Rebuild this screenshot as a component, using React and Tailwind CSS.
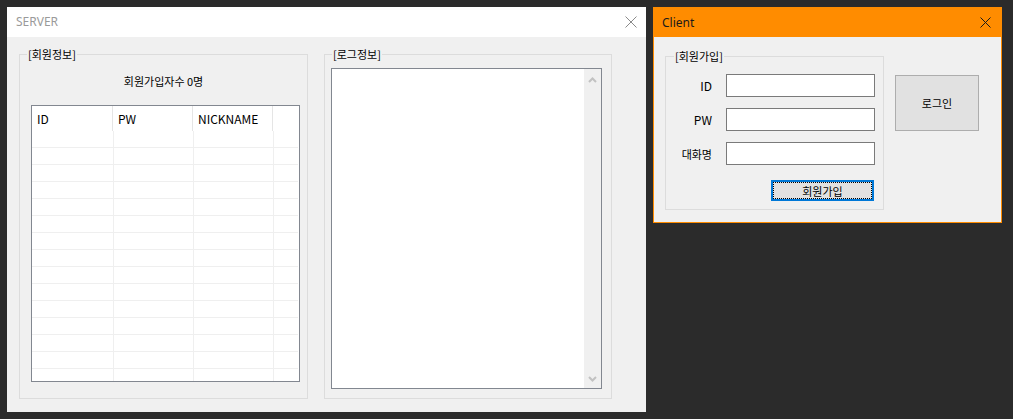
import React from 'react';

const CloseIcon = ({ color, size }) => (
    <svg width={size} height={size} viewBox={`0 0 ${size} ${size}`}>
        <line x1="0.5" y1="0.5" x2={size - 0.5} y2={size - 0.5} stroke={color} strokeWidth="1" />
        <line x1={size - 0.5} y1="0.5" x2="0.5" y2={size - 0.5} stroke={color} strokeWidth="1" />
    </svg>
);

const Chevron = ({ up }) => (
    <svg width="9" height="6" viewBox="0 0 9 6">
        <polyline
            points={up ? '1,5 4.5,1.5 8,5' : '1,1 4.5,4.5 8,1'}
            fill="none"
            stroke="#c2c2c2"
            strokeWidth="2"
        />
    </svg>
);

const GroupBox = ({ label, labelLeft, className, children }) => (
    <div className={`relative border border-[#dcdcdc] ${className}`}>
        <span
            className="absolute top-[-9px] px-[1px] bg-[#f0f0f0] text-[11px] leading-[16px] text-black"
            style={{ left: labelLeft }}
        >
            {label}
        </span>
        {children}
    </div>
);

const ServerWindow = () => {
    const rows = Array.from({ length: 15 });

    return (
        <div className="w-[639px] h-[405px] flex flex-col bg-[#f0f0f0]">
            <div className="h-[30px] bg-white flex items-center justify-between pl-[9px] pr-[9px]">
                <span className="font-['Noto_Sans',sans-serif] text-[12px] text-[#9a9a9a]">SERVER</span>
                <CloseIcon color="#8a8a8a" size={12} />
            </div>

            <div className="flex-1 flex gap-[16px] pl-[12px] pt-[17px]">
                <GroupBox label="[회원정보]" labelLeft={7} className="w-[289px] h-[345px] flex flex-col">
                    <div className="pt-[18px] text-center text-[11px] leading-[16px] text-black">
                        회원가입자수 0명
                    </div>
                    <div className="mt-[16px] ml-[11px] w-[269px] h-[277px] border border-[#828790] bg-white overflow-hidden">
                        <div className="flex h-[25px] text-[12px] text-black">
                            <div className="w-[81px] border-r border-[#e5e5e5] pl-[5px] flex items-center">ID</div>
                            <div className="w-[80px] border-r border-[#e5e5e5] pl-[5px] flex items-center">PW</div>
                            <div className="w-[80px] border-r border-[#e5e5e5] pl-[5px] flex items-center">NICKNAME</div>
                            <div className="flex-1" />
                        </div>
                        {rows.map((_, i) => (
                            <div key={i} className="flex h-[17px] border-b border-[#efefef] mr-[1px]">
                                <div className="w-[82px] border-r border-[#efefef]" />
                                <div className="w-[80px] border-r border-[#efefef]" />
                                <div className="w-[80px] border-r border-[#efefef]" />
                                <div className="flex-1" />
                            </div>
                        ))}
                    </div>
                </GroupBox>

                <GroupBox label="[로그정보]" labelLeft={7} className="w-[288px] h-[345px]">
                    <div className="mt-[13px] ml-[6px] w-[271px] h-[321px] border border-[#828790] bg-white flex justify-end">
                        <div className="w-[17px] bg-[#f0f0f0] flex flex-col items-center justify-between pt-[8px] pb-[6px]">
                            <Chevron up />
                            <Chevron />
                        </div>
                    </div>
                </GroupBox>
            </div>
        </div>
    );
};

const ClientWindow = () => {
    const fields = ['ID', 'PW', '대화명'];

    return (
        <div className="w-[349px] h-[216px] border border-[#ff8c00] flex flex-col bg-[#f0f0f0]">
            <div className="h-[29px] bg-[#ff8c00] flex items-center justify-between pl-[8px] pr-[10px]">
                <span className="font-['Noto_Sans',sans-serif] text-[12px] text-[#1a1a1a]">Client</span>
                <CloseIcon color="#1a1a1a" size={11} />
            </div>

            <div className="flex-1 flex items-start pl-[11px] pt-[19px]">
                <GroupBox label="[회원가입]" labelLeft={8} className="w-[219px] h-[154px] flex flex-col pt-[17px] gap-[11px]">
                    {fields.map((f) => (
                        <div key={f} className="flex items-center">
                            <div className={`w-[46px] text-right leading-[16px] text-black ${f === '대화명' ? 'text-[11px]' : 'text-[12px]'}`}>
                                {f}
                            </div>
                            <div className="ml-[14px] w-[149px] h-[23px] border border-[#7a7a7a] bg-white" />
                        </div>
                    ))}
                    <button className="mt-[4px] ml-[105px] w-[103px] h-[21px] border-2 border-[#0078d7] bg-[#e1e1e1] p-0 flex">
                        <span className="flex-1 border border-dotted border-black flex items-center justify-center text-[11px] leading-[16px] text-black">
                            회원가입
                        </span>
                    </button>
                </GroupBox>

                <button className="ml-[11px] mt-[19px] w-[84px] h-[56px] border border-[#adadad] bg-[#e1e1e1] text-[11px] text-black">
                    로그인
                </button>
            </div>
        </div>
    );
};

const App = () => {
    return (
        <div className="w-[1013px] h-[419px] bg-[#2b2b2b] flex items-start gap-[7px] pl-[7px] pt-[7px] font-['Noto_Sans_CJK_KR','Noto_Sans',sans-serif] overflow-hidden">
            <ServerWindow />
            <ClientWindow />
        </div>
    );
};

export default App;
